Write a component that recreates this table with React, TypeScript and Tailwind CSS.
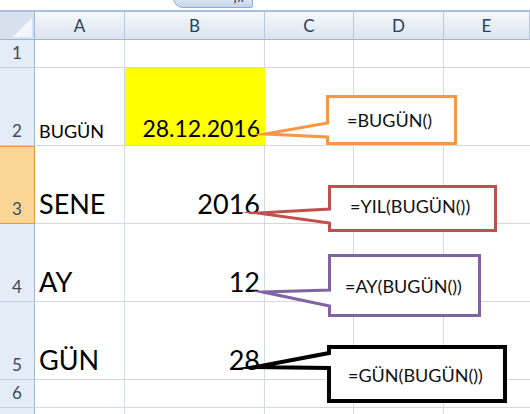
const FONT = { fontFamily: "Lato, 'Open Sans', sans-serif" };

const grid = "grid grid-cols-[35px_90px_140px_89px_90px_86px]";

type Row = {
  n: number;
  h: string;
  label?: boolean;
  a?: string;
  b?: string;
  aCls?: string;
  bCls?: string;
  yellow?: boolean;
  selected?: boolean;
};

const rows: Row[] = [
  { n: 1, h: "h-[28px]", label: true },
  { n: 2, h: "h-[78px]", label: true, a: "BUGÜN", b: "28.12.2016", aCls: "text-[18px] pb-[5px]", bCls: "text-[23px] pb-[5px]", yellow: true },
  { n: 3, h: "h-[78px]", label: true, a: "SENE", b: "2016", aCls: "text-[27px] pb-[6px]", bCls: "text-[27px] pb-[6px]", selected: true },
  { n: 4, h: "h-[78px]", label: true, a: "AY", b: "12", aCls: "text-[27px] pb-[6px]", bCls: "text-[27px] pb-[6px]" },
  { n: 5, h: "h-[78px]", label: true, a: "GÜN", b: "28", aCls: "text-[27px] pb-[6px]", bCls: "text-[27px] pb-[6px]" },
  { n: 6, h: "h-[28px]", label: true },
  { n: 7, h: "h-[28px]" },
];

const callouts = [
  { color: "#f79646", w: 3, box: [326, 95, 457, 145], base: [123, 137], tip: [265, 134] },
  { color: "#c0504d", w: 3, box: [328, 185, 497, 232], base: [209, 223], tip: [257, 213] },
  { color: "#8064a2", w: 3, box: [328, 254, 481, 317], base: [290, 306], tip: [263, 292] },
  { color: "#000000", w: 4, box: [327, 345, 507, 403], base: [353, 368], tip: [255, 367] },
];

const labels = [
  { text: "=BUGÜN()", cls: "left-[347px] top-[111px]" },
  { text: "=YIL(BUGÜN())", cls: "left-[350px] top-[197px]" },
  { text: "=AY(BUGÜN())", cls: "left-[345px] top-[277px]" },
  { text: "=GÜN(BUGÜN())", cls: "left-[348px] top-[366px]" },
];

function calloutPath(c: (typeof callouts)[number]) {
  const h = c.w / 2;
  const [x1, y1, x2, y2] = c.box;
  const l = x1 + h;
  return `M${l},${y1 + h} L${x2 - h},${y1 + h} L${x2 - h},${y2 - h} L${l},${y2 - h} L${l},${c.base[1]} L${c.tip[0]},${c.tip[1]} L${l},${c.base[0]} Z`;
}

export default function App() {
  return (
    <div className="relative h-[414px] w-[530px] overflow-hidden bg-white" style={FONT}>
      {/* formula bar leftover */}
      <div className="relative h-[10px] border-b-2 border-[#a9c1de] box-content">
        <span className="absolute left-[66px] top-[-15px] text-[17px] leading-none text-[#333]">F5</span>
        <div className="absolute left-[173px] top-[-6px] h-[14px] w-[80px] rounded-bl-[10px] rounded-br-[2px] border border-[#8eaad0] bg-gradient-to-b from-[#e7eef8] to-[#c3d5ec]">
          <span className="absolute right-[8px] top-[-4px] text-[13px] italic leading-none text-[#333]">fx</span>
        </div>
      </div>

      {/* column headers */}
      <div className={`${grid} h-[28px]`}>
        <div className="relative border-r border-b border-[#9eb6ce] bg-[#d7e1ee]">
          <svg className="absolute left-[13px] top-[6px]" width="20" height="20" viewBox="0 0 20 20">
            <defs>
              <linearGradient id="tri" x1="0" y1="0" x2="1" y2="1">
                <stop offset="0" stopColor="#ffffff" />
                <stop offset="1" stopColor="#eef2f8" />
              </linearGradient>
            </defs>
            <polygon points="0,19 19,0 19,19" fill="url(#tri)" />
          </svg>
        </div>
        {["A", "B", "C", "D", "E"].map((c) => (
          <div
            key={c}
            className="flex items-center justify-center border-r border-b border-[#9eb6ce] border-r-[#b6c8dc] bg-gradient-to-b from-[#f5f8fb] to-[#dce4ef] text-[17px] leading-none text-[#27405e]"
          >
            {c}
          </div>
        ))}
      </div>

      {/* rows */}
      {rows.map((r) => (
        <div key={r.n} className={`${grid} ${r.h}`}>
          <div
            className={`flex items-end justify-center pb-[6px] text-[17px] leading-none border-r border-b ${
              r.selected
                ? "bg-[#fdd595] border-[#f29536] shadow-[inset_0_1px_0_#f29536] text-[#3b4a5c]"
                : "bg-[#e4ecf7] border-b-[#c2d0e2] border-r-[#9eb6ce] text-[#3b4a5c]"
            }`}
          >
            {r.label ? r.n : null}
          </div>
          <div className={`flex items-end border-r border-b border-[#d0d7e5] pl-[4px] leading-none text-black ${r.aCls ?? ""}`}>
            {r.a}
          </div>
          <div
            className={`flex items-end justify-end border-r border-b pr-[4px] leading-none text-black ${
              r.yellow ? "bg-[#ffff00] border-[#ffff00] border-b-[#d0d7e5]" : "border-[#d0d7e5]"
            } ${r.bCls ?? ""}`}
          >
            {r.b}
          </div>
          <div className="border-r border-b border-[#d0d7e5]" />
          <div className="border-r border-b border-[#d0d7e5]" />
          <div className="border-b border-[#d0d7e5]" />
        </div>
      ))}

      {/* callouts */}
      <svg className="pointer-events-none absolute left-0 top-0" width="530" height="414">
        {callouts.map((c, i) => (
          <path key={i} d={calloutPath(c)} fill="#ffffff" stroke={c.color} strokeWidth={c.w} strokeLinejoin="miter" strokeMiterlimit={20} />
        ))}
      </svg>
      {labels.map((l) => (
        <div key={l.text} className={`absolute text-[18px] leading-none text-[#111] ${l.cls}`}>
          {l.text}
        </div>
      ))}
    </div>
  );
}
